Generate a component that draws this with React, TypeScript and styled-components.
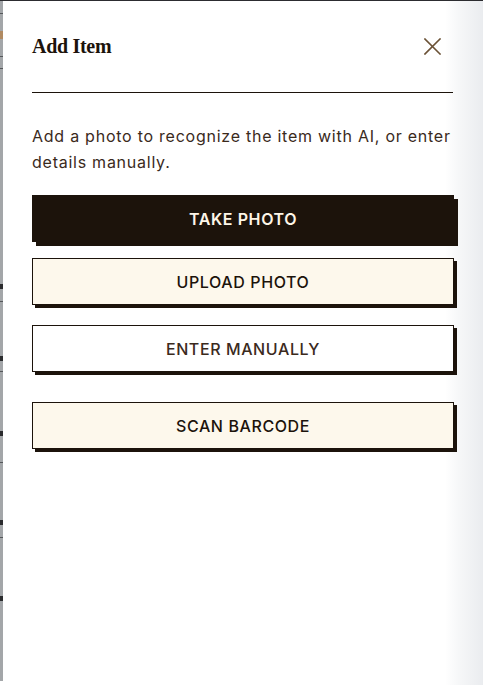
import React from "react";
import styled, { createGlobalStyle } from "styled-components";

const GlobalStyle = createGlobalStyle`
  html, body {
    margin: 0;
    padding: 0;
    background: #ffffff;
  }
  * {
    box-sizing: border-box;
  }
`;

// slices of the page that peeks out behind the drawer
const backdropMarks = [
  { h: 12, c: "#a3a6a9" },
  { h: 1, c: "#55575a" },
  { h: 17, c: "#a3a6a9" },
  { h: 8, c: "#b08a62" },
  { h: 17, c: "#a3a6a9" },
  { h: 1, c: "#55575a" },
  { h: 11, c: "#a3a6a9" },
  { h: 1, c: "#55575a" },
  { h: 215, c: "#a3a6a9" },
  { h: 5, c: "#2a2b2d" },
  { h: 12, c: "#a3a6a9" },
  { h: 1, c: "#55575a" },
  { h: 54, c: "#a3a6a9" },
  { h: 5, c: "#2a2b2d" },
  { h: 10, c: "#a3a6a9" },
  { h: 1, c: "#55575a" },
  { h: 59, c: "#a3a6a9" },
  { h: 5, c: "#2a2b2d" },
  { h: 26, c: "#a3a6a9" },
  { h: 1, c: "#55575a" },
  { h: 57, c: "#a3a6a9" },
  { h: 5, c: "#2a2b2d" },
  { h: 12, c: "#a3a6a9" },
  { h: 1, c: "#55575a" },
  { h: 58, c: "#a3a6a9" },
  { h: 5, c: "#2a2b2d" },
  { h: 80, c: "#a3a6a9" },
];

type Variant = "dark" | "cream" | "plain";

const actions: { label: string; variant: Variant; gap: number }[] = [
  { label: "TAKE PHOTO", variant: "dark", gap: 16 },
  { label: "UPLOAD PHOTO", variant: "cream", gap: 20 },
  { label: "ENTER MANUALLY", variant: "plain", gap: 30 },
  { label: "SCAN BARCODE", variant: "cream", gap: 0 },
];

export default function App() {
  return (
    <>
      <GlobalStyle />
      <SScreen>
        <SBackdrop>
          {backdropMarks.map((m, i) => (
            <SMark key={i} style={{ height: m.h, background: m.c }} />
          ))}
        </SBackdrop>

        <SDrawer>
          <SHeader>
            <STitle>Add Item</STitle>
            <SClose aria-label="Close">
              <svg width="17" height="17" viewBox="0 0 17 17" fill="none">
                <path
                  d="M1 1L16 16M16 1L1 16"
                  stroke="#6b5236"
                  strokeWidth="1.6"
                  strokeLinecap="square"
                />
              </svg>
            </SClose>
          </SHeader>

          <SIntro>
            Add a photo to recognize the item with AI, or enter details
            manually.
          </SIntro>

          <SActions>
            {actions.map((a) => (
              <SActionButton key={a.label} $variant={a.variant} $gap={a.gap}>
                {a.label}
              </SActionButton>
            ))}
          </SActions>
        </SDrawer>
      </SScreen>
    </>
  );
}

const SScreen = styled.div`
  display: flex;
  height: 685px;
  border-top: 1px solid #2c2c30;
  overflow: hidden;
`;

const SBackdrop = styled.div`
  width: 3px;
  flex: 0 0 3px;
  display: flex;
  flex-direction: column;
`;

const SMark = styled.div`
  width: 100%;
  flex-shrink: 0;
`;

const SDrawer = styled.section`
  flex: 1;
  padding: 0 29px;
  background: linear-gradient(
    to right,
    #ffffff calc(100% - 38px),
    #f6f7f8 calc(100% - 24px),
    #eaecef 100%
  );
  font-family: "Inter", "Noto Sans", sans-serif;
`;

const SHeader = styled.header`
  height: 92px;
  display: flex;
  align-items: center;
  justify-content: space-between;
  padding-right: 12px;
  border-bottom: 1px solid #1c130b;
  width: 421px;
`;

const STitle = styled.h2`
  margin: 0;
  font-family: "Liberation Serif", "DejaVu Serif", serif;
  font-size: 20px;
  font-weight: 700;
  color: #1c130b;
  letter-spacing: -0.3px;
`;

const SClose = styled.button`
  display: flex;
  align-items: center;
  justify-content: center;
  padding: 0;
  border: none;
  background: transparent;
  cursor: pointer;
`;

const SIntro = styled.p`
  margin: 30px 0 0;
  font-size: 16px;
  line-height: 26px;
  color: #3a2a1c;
  letter-spacing: 0.75px;
`;

const SActions = styled.div`
  display: flex;
  flex-direction: column;
  margin-top: 20px;
`;

const SActionButton = styled.button<{ $variant: Variant; $gap: number }>`
  height: 47px;
  width: 100%;
  margin-bottom: ${(p) => p.$gap}px;
  border: 1px solid #1c130b;
  box-shadow: ${(p) => (p.$variant === "dark" ? "4px 4px" : "3px 3px")} 0
    #1c130b;
  background: ${(p) =>
    p.$variant === "dark"
      ? "#1c130b"
      : p.$variant === "cream"
      ? "#fdf8ec"
      : "#ffffff"};
  color: ${(p) =>
    p.$variant === "dark"
      ? "#fdf6e8"
      : p.$variant === "plain"
      ? "#3b2a1d"
      : "#1c130b"};
  font-family: "Inter", "Noto Sans", sans-serif;
  font-size: 16px;
  font-weight: ${(p) => (p.$variant === "dark" ? 600 : 500)};
  letter-spacing: 0.6px;
  cursor: pointer;
`;
